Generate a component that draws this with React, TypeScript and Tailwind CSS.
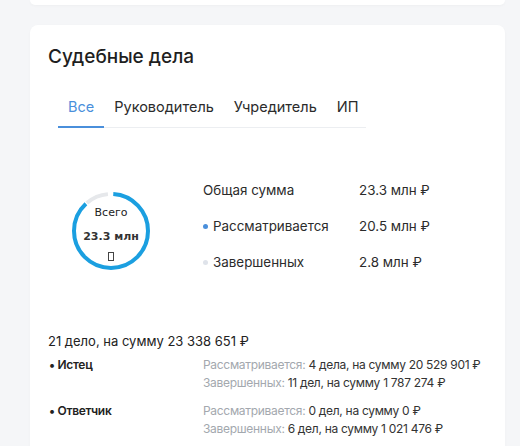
import React from "react";

const font = { fontFamily: "Inter, 'Noto Sans', sans-serif" };

const TABS = ["Все", "Руководитель", "Учредитель", "ИП"];

const STATS = [
  { label: "Общая сумма", value: "23.3 млн ₽", dot: null },
  { label: "Рассматривается", value: "20.5 млн ₽", dot: "bg-[#4a8fdb]" },
  { label: "Завершенных", value: "2.8 млн ₽", dot: "bg-[#dfe3ea]" },
];

const PARTIES = [
  {
    name: "Истец",
    lines: [
      { k: "Рассматривается:", v: "4 дела, на сумму 20 529 901 ₽" },
      { k: "Завершенных:", v: "11 дел, на сумму 1 787 274 ₽" },
    ],
  },
  {
    name: "Ответчик",
    lines: [
      { k: "Рассматривается:", v: "0 дел, на сумму 0 ₽" },
      { k: "Завершенных:", v: "6 дел, на сумму 1 021 476 ₽" },
    ],
  },
];

function Donut() {
  const r = 37;
  const c = 2 * Math.PI * r;
  const blue = c * 0.87;
  const gray = c * 0.1;
  return (
    <div className="relative h-[80px] w-[80px]">
      <svg width="80" height="80" viewBox="0 0 80 80" className="-rotate-90">
        <circle
          cx="40"
          cy="40"
          r={r}
          fill="none"
          stroke="#e6e8eb"
          strokeWidth="4"
          strokeDasharray={`${gray} ${c}`}
          strokeDashoffset={-(c * 0.885)}
        />
        <circle
          cx="40"
          cy="40"
          r={r}
          fill="none"
          stroke="#1b9fe0"
          strokeWidth="4"
          strokeDasharray={`${blue} ${c}`}
          strokeDashoffset={-(c * 0.01)}
        />
      </svg>
      <div
        className="absolute inset-0 flex flex-col items-center pt-[15px] text-[#222]"
        style={{ fontFamily: "'DejaVu Sans', sans-serif" }}
      >
        <div className="text-[11px] leading-[14px]">Всего</div>
        <div className="mt-[10px] text-[11px] leading-[14px] font-bold text-[#333]">
          23.3 млн
        </div>
        <div className="mt-[8px] h-[9px] w-[6px] border border-[#444]" />
      </div>
    </div>
  );
}

export default function App() {
  return (
    <div className="min-h-[446px] overflow-hidden bg-[#f5f6f8] pl-[30px] text-[#222]" style={font}>
      <div className="h-[5px] w-[475px] rounded-b-lg bg-white shadow-[0_1px_3px_rgba(0,0,0,0.03)]" />

      <div className="mt-[20px] w-[475px] rounded-t-lg bg-white px-[18px] pt-[20px] pb-[20px] shadow-[0_1px_3px_rgba(0,0,0,0.03)]">
        <h2 className="text-[19px] leading-[24px] font-medium text-[#1f1f1f]">
          Судебные дела
        </h2>

        <div className="mt-[28px] ml-[10px] flex w-[308px] border-b border-[#eceef1]">
          {TABS.map((t, i) => (
            <div
              key={t}
              className={
                i === 0
                  ? "-mb-px border-b-2 border-[#4a8fdb] px-[10px] pb-[9px] text-[14.5px] leading-[20px] text-[#4a8fdb]"
                  : "px-[10px] pb-[9px] text-[14.5px] leading-[20px] text-[#2b2b2b]"
              }
            >
              {t}
            </div>
          ))}
        </div>

        <div className="mt-[51px] flex items-start">
          <div className="mt-[12px] ml-[23px]">
            <Donut />
          </div>
          <div className="ml-[52px] flex flex-col gap-[14px] text-[13.4px] leading-[22px] text-[#2b2b2b]">
            {STATS.map((s) => (
              <div key={s.label} className="flex">
                <div className="flex w-[156px] items-center">
                  {s.dot && <span className={`mr-[5px] h-[5px] w-[5px] rounded-full ${s.dot}`} />}
                  {s.label}
                </div>
                <div>{s.value}</div>
              </div>
            ))}
          </div>
        </div>

        <div className="mt-[58px] text-[13px] leading-[20px] text-[#222]">
          21 дело, на сумму 23 338 651 ₽
        </div>

        <div className="mt-[5px] flex flex-col gap-[10px]">
          {PARTIES.map((p) => (
            <div key={p.name} className="flex text-[12px] leading-[18px] tracking-[-0.025em]">
              <div className="w-[155px] shrink-0 pl-[1px] font-semibold text-[#222]">• {p.name}</div>
              <div className="whitespace-nowrap">
                {p.lines.map((l) => (
                  <div key={l.k}>
                    <span className="text-[#a3a8ae]">{l.k}</span>{" "}
                    <span className="text-[#333]">{l.v}</span>
                  </div>
                ))}
              </div>
            </div>
          ))}
        </div>
      </div>
    </div>
  );
}
